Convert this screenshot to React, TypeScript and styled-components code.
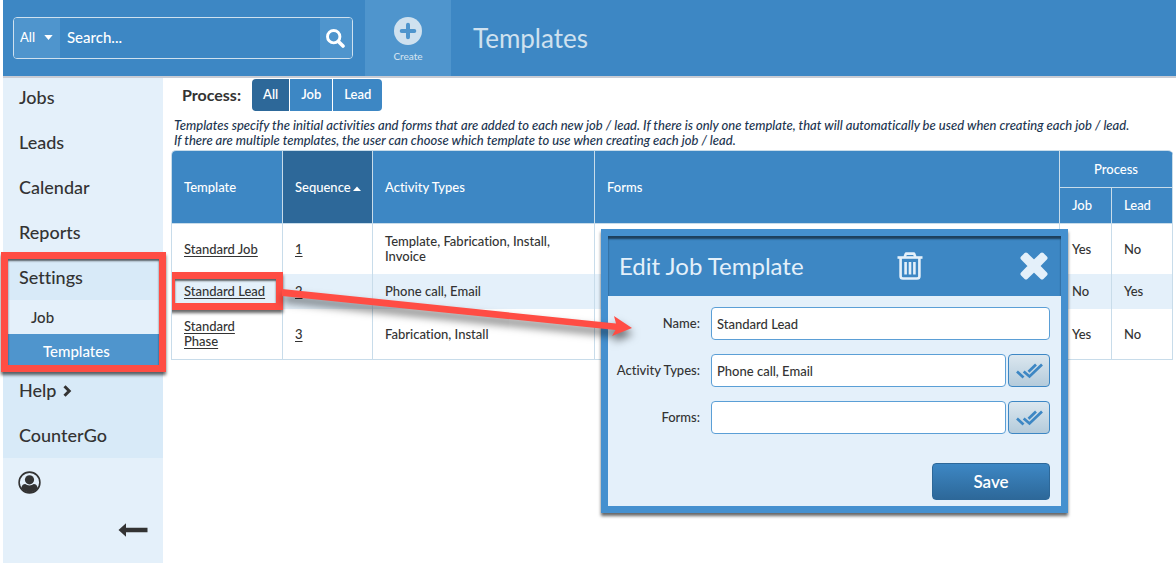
import React from "react";
import styled, { createGlobalStyle, css } from "styled-components";

const color = {
  blue: "#3d87c4",
  blueLight: "#4f95cd",
  blueDark: "#2d6899",
  frame: "#4590cf",
  pale: "#e4f0fa",
  paleDeep: "#d8eaf8",
  line: "#c8dcea",
  text: "#333333",
  navy: "#1c3550",
  soft: "#cfe1ef",
  red: "#ff4d44",
};

const GlobalStyle = createGlobalStyle`
  * { box-sizing: border-box; }
  body {
    margin: 0;
    background: #fff;
    color: ${color.text};
    font: 500 13px/15px Lato, "Open Sans", sans-serif;
    font-variant-ligatures: none;
  }
  button, input, select {
    font: inherit;
    font-variant-ligatures: inherit;
    color: inherit;
    margin: 0;
  }
  button { cursor: pointer; }
  svg { display: block; }
`;

const Page = styled.div`
  padding-left: 3px;
  min-height: 100vh;
  display: flex;
  flex-direction: column;
`;

const Header = styled.header`
  position: relative;
  z-index: 1;
  display: flex;
  align-items: stretch;
  height: 75px;
  background: ${color.blue};
  box-shadow: 0 1px 0 ${color.blue}, 0 3px 0 #c9ccd4;
`;

const SearchForm = styled.form`
  display: flex;
  width: 340px;
  height: 42px;
  margin: 17px 12px 0 10px;
  border: 1px solid ${color.soft};
  border-radius: 4px;
  overflow: hidden;
  color: #fff;
`;

const ScopeWrap = styled.div`
  position: relative;
  width: 46px;
  background: ${color.blueLight};
  svg {
    position: absolute;
    right: 7px;
    top: 17px;
    pointer-events: none;
  }
`;

const ScopeSelect = styled.select`
  appearance: none;
  width: 100%;
  height: 100%;
  padding: 0 0 2px 6px;
  border: 0;
  background: transparent;
  font-size: 13px;
  option { color: ${color.text}; }
`;

const SearchInput = styled.input`
  flex: 1;
  min-width: 0;
  padding: 0 7px 2px;
  border: 0;
  background: transparent;
  font-size: 15px;
  &::placeholder { color: #fff; opacity: 1; }
`;

const SearchButton = styled.button`
  display: grid;
  place-items: center;
  width: 32px;
  padding: 0 2px 0 0;
  border: 0;
  background: ${color.blueLight};
`;

const CreateButton = styled.button`
  display: flex;
  flex-direction: column;
  align-items: center;
  gap: 4px;
  width: 86px;
  height: 76px;
  padding: 17px 0 0;
  border: 0;
  background: ${color.blueLight};
  color: ${color.soft};
  font-size: 10px;
  line-height: 15px;
`;

const PageTitle = styled.h1`
  margin: 0 0 0 22px;
  color: ${color.soft};
  font-size: 26px;
  font-weight: 400;
  line-height: 76px;
`;

const Body = styled.div`
  flex: 1;
  display: flex;
`;

const Sidebar = styled.nav`
  flex: 0 0 160px;
  background: ${color.pale};
`;

const NavLink = styled.a<{ $shaded?: boolean }>`
  display: flex;
  align-items: center;
  gap: 7px;
  height: 45px;
  padding-left: 16px;
  background: ${(p) => (p.$shaded ? color.paleDeep : "transparent")};
  color: ${color.text};
  font-size: 18px;
  text-decoration: none;
`;

const SubLink = styled.a<{ $active?: boolean }>`
  display: flex;
  align-items: center;
  height: 34px;
  padding-left: ${(p) => (p.$active ? 40 : 28)}px;
  background: ${(p) => (p.$active ? color.blueLight : "transparent")};
  color: ${(p) => (p.$active ? "#fff" : color.text)};
  font-size: 15px;
  text-decoration: none;
`;

const NavGroup = styled.div`
  position: relative;
`;

const marker = css`
  position: absolute;
  z-index: 2;
  border: 7px solid ${color.red};
  box-shadow: 0 3px 3px rgba(0, 0, 0, 0.6), inset 0 2px 2px rgba(0, 0, 0, 0.6);
  pointer-events: none;
`;

const GroupMarker = styled.span`
  ${marker}
  inset: -3px -3px -4px -2px;
`;

const CellMarker = styled.span`
  ${marker}
  inset: -2px -1px -1px -4px;
`;

const IconButton = styled.button<{ $end?: boolean }>`
  display: flex;
  align-items: center;
  justify-content: ${(p) => (p.$end ? "flex-end" : "flex-start")};
  width: 100%;
  height: 48px;
  padding: 0 15px;
  border: 0;
  background: transparent;
  color: ${color.text};
`;

const Main = styled.main`
  position: relative;
  flex: 1;
  min-width: 0;
  padding: 4px 3px 0 8px;
`;

const FilterRow = styled.div`
  display: flex;
  align-items: center;
  gap: 11px;
  padding-left: 11px;
`;

const FilterLabel = styled.span`
  padding-bottom: 2px;
  font-size: 16px;
  font-weight: 700;
`;

const Segments = styled.div`
  display: flex;
  gap: 1px;
  border-radius: 4px;
  overflow: hidden;
`;

const Segment = styled.button<{ $active?: boolean }>`
  height: 32px;
  padding: 0 11px 2px;
  border: 0;
  background: ${(p) => (p.$active ? color.blueDark : color.blue)};
  color: #fff;
  font-weight: 600;
`;

const Intro = styled.p`
  margin: 7px 0 2px;
  padding-left: 3px;
  color: ${color.navy};
  font-style: italic;
`;

const Table = styled.table`
  width: 100%;
  table-layout: fixed;
  border-collapse: separate;
  border-spacing: 0;
  border: solid ${color.line};
  border-width: 1px 0 0 1px;
  border-radius: 5px 5px 0 0;
  overflow: hidden;
`;

const Col = styled.col<{ $w?: number }>`
  width: ${(p) => (p.$w ? `${p.$w}px` : "auto")};
`;

const Th = styled.th<{ $sorted?: boolean; $center?: boolean }>`
  height: ${(p) => (p.$center ? 37 : 36)}px;
  padding: 0 0 0 12px;
  border: solid ${color.line};
  border-width: 0 1px 1px 0;
  background: ${(p) => (p.$sorted ? color.blueDark : color.blue)};
  color: #fff;
  font-weight: 500;
  text-align: ${(p) => (p.$center ? "center" : "left")};
  ${(p) => p.$center && "padding-left: 0;"}
  white-space: nowrap;
  svg { display: inline-block; margin-left: 2px; vertical-align: 1px; }
`;

const Row = styled.tr`
  &:nth-child(even) { background: ${color.pale}; }
  &:last-child td { border-bottom: 1px solid ${color.line}; }
`;

const Td = styled.td`
  position: relative;
  padding: 10px 30px 10px 12px;
  border-right: 1px solid ${color.line};
  &:first-child { padding-right: 12px; }
`;

const CellLink = styled.a`
  color: ${color.text};
  text-decoration: underline;
  text-underline-offset: 2px;
`;

const Dialog = styled.section`
  position: absolute;
  z-index: 3;
  left: 438px;
  top: 154px;
  width: 467px;
  border: 7px solid ${color.frame};
  background: ${color.pale};
  box-shadow: 0 3px 3px rgba(0, 0, 0, 0.6);
`;

const DialogHeader = styled.div`
  display: flex;
  align-items: center;
  height: 60px;
  padding: 0 13px 0 11px;
  background: ${color.blue};
  box-shadow: inset 0 3px 2px #1d3f5c;
  color: ${color.pale};
`;

const DialogTitle = styled.h2`
  flex: 1;
  margin: 0;
  font-size: 24px;
  font-weight: 400;
  line-height: 30px;
`;

const HeaderButton = styled.button`
  padding: 0;
  border: 0;
  background: transparent;
  & + & { margin-left: 97px; }
`;

const DialogForm = styled.form`
  display: grid;
  grid-template-columns: 92px 1fr;
  gap: 14px 11px;
  padding: 11px 11px 6px 0;
`;

const FieldLabel = styled.label`
  align-self: center;
  text-align: right;
`;

const FieldControls = styled.div`
  display: flex;
  gap: 2px;
`;

const TextInput = styled.input`
  flex: 1;
  min-width: 0;
  height: 33px;
  padding: 0 5px;
  border: 1px solid #5b9fd6;
  border-radius: 4px;
  background: #fff;
`;

const PickButton = styled.button`
  display: grid;
  place-items: center;
  width: 42px;
  height: 33px;
  padding: 0;
  border: 1px solid ${color.blue};
  border-radius: 4px;
  background: linear-gradient(#dbe7ef, #b4cbdb);
  color: ${color.blue};
`;

const SaveButton = styled.button`
  grid-column: 2;
  justify-self: end;
  width: 118px;
  height: 37px;
  margin-top: 15px;
  border: 1px solid ${color.blueDark};
  border-radius: 4px;
  background: linear-gradient(${color.blue}, ${color.blueDark});
  color: #fff;
  font-size: 17px;
  font-weight: 600;
`;

const Pointer = styled.svg`
  position: absolute;
  z-index: 4;
  left: 119px;
  top: 205px;
  pointer-events: none;
  filter: drop-shadow(1px 6px 4px rgba(0, 0, 0, 0.55));
`;

const SearchIcon = () => (
  <svg width="19" height="19" viewBox="0 0 19 19" fill="none" stroke="#fff">
    <circle cx="7.7" cy="7.7" r="6.2" strokeWidth="2.9" />
    <path d="M12.4 12.4 17 17" strokeWidth="3.6" strokeLinecap="round" />
  </svg>
);

const PlusIcon = () => (
  <svg width="28" height="28" viewBox="0 0 28 28">
    <circle cx="14" cy="14" r="14" fill={color.soft} />
    <path d="M14 7.700v12.600M7.700 14h12.600" stroke={color.blueLight} strokeWidth="4" strokeLinecap="round" />
  </svg>
);

const CaretDown = () => (
  <svg width="9" height="5" viewBox="0 0 9 5">
    <path d="M.3 0h8.4L4.5 5z" fill="#fff" />
  </svg>
);

const CaretUp = () => (
  <svg width="8" height="5" viewBox="0 0 8 5">
    <path d="M0 5h8L4 .5z" fill="#fff" />
  </svg>
);

const ChevronIcon = () => (
  <svg width="9" height="13" viewBox="0 0 9 13">
    <path d="M1.500 2.300 6.200 7 1.500 11.700" fill="none" stroke="currentColor" strokeWidth="3" />
  </svg>
);

const UserIcon = () => (
  <svg width="23" height="23" viewBox="0 0 23 23">
    <circle cx="11.5" cy="11.5" r="10.4" fill="none" stroke="currentColor" strokeWidth="1.6" />
    <circle cx="11.5" cy="8.8" r="4.6" fill="currentColor" />
    <path d="M3.300 17.200c.4-2.700 1.700-4.200 4-4.200 1.100.900 2.500 1.400 4.200 1.400s3.100-.5 4.200-1.400c2.300 0 3.600 1.500 4 4.200a10 10 0 0 1-16.400 0z" fill="currentColor" />
  </svg>
);

const BackIcon = () => (
  <svg width="30" height="14" viewBox="0 0 30 14">
    <path d="M.5 7 8 .3v4.500h21.500v4.400H8v4.500z" fill="currentColor" />
  </svg>
);

const TrashIcon = () => (
  <svg width="26" height="28" viewBox="0 0 26 28" fill="none" stroke="currentColor">
    <path d="M.5 5.500h25" strokeWidth="2.600" />
    <path d="M7.600 5 9 1.600h8L18.400 5" strokeWidth="2.600" strokeLinejoin="round" />
    <path d="M3.600 6v18.200q0 2.300 2.400 2.300h14q2.400 0 2.400-2.300V6" strokeWidth="2.600" />
    <path d="M8.600 10v12.500M13 10v12.500M17.400 10v12.500" strokeWidth="2.600" />
  </svg>
);

const CloseIcon = () => (
  <svg width="28" height="28" viewBox="0 0 28 28">
    <path
      d="M6 2.500 14 10.300 22 2.500 25.500 6 17.700 14 25.500 22 22 25.500 14 17.700 6 25.500 2.500 22 10.300 14 2.500 6z"
      fill="currentColor"
      stroke="currentColor"
      strokeWidth="4"
      strokeLinejoin="round"
    />
  </svg>
);

const DoubleCheckIcon = () => (
  <svg width="27" height="16" viewBox="0 0 27 16" fill="none" stroke="currentColor" strokeWidth="2.700">
    <path d="M1 8.500 7.500 14.500" />
    <path d="M7.700 8.500 13.500 13.500 26 1.500" />
    <path d="M12.500 8.800 20 1.500" />
  </svg>
);

const ROWS = [
  { name: "Standard Job", seq: 1, types: "Template, Fabrication, Install, Invoice", job: "Yes", lead: "No" },
  { name: "Standard Lead", seq: 2, types: "Phone call, Email", job: "No", lead: "Yes", marked: true },
  { name: "Standard Phase", seq: 3, types: "Fabrication, Install", job: "Yes", lead: "No" },
];

export default function App() {
  return (
    <>
      <GlobalStyle />
      <Page>
        <Header>
          <SearchForm role="search" onSubmit={(e) => e.preventDefault()}>
            <ScopeWrap>
              <ScopeSelect aria-label="Search scope">
                <option>All</option>
              </ScopeSelect>
              <CaretDown />
            </ScopeWrap>
            <SearchInput type="text" placeholder="Search..." aria-label="Search" />
            <SearchButton aria-label="Submit search">
              <SearchIcon />
            </SearchButton>
          </SearchForm>
          <CreateButton type="button">
            <PlusIcon />
            Create
          </CreateButton>
          <PageTitle>Templates</PageTitle>
        </Header>
        <Body>
          <Sidebar>
            {["Jobs", "Leads", "Calendar", "Reports"].map((label) => (
              <NavLink href="#" key={label}>{label}</NavLink>
            ))}
            <NavGroup>
              <NavLink href="#" $shaded>Settings</NavLink>
              <SubLink href="#">Job</SubLink>
              <SubLink href="#" $active>Templates</SubLink>
              <GroupMarker />
            </NavGroup>
            <NavLink href="#" $shaded>Help <ChevronIcon /></NavLink>
            <NavLink href="#" $shaded>CounterGo</NavLink>
            <IconButton type="button" aria-label="Account"><UserIcon /></IconButton>
            <IconButton type="button" aria-label="Collapse menu" $end><BackIcon /></IconButton>
          </Sidebar>
          <Main>
            <FilterRow>
              <FilterLabel id="process-label">Process:</FilterLabel>
              <Segments role="group" aria-labelledby="process-label">
                <Segment type="button" $active>All</Segment>
                <Segment type="button">Job</Segment>
                <Segment type="button">Lead</Segment>
              </Segments>
            </FilterRow>
            <Intro>
              Templates specify the initial activities and forms that are added to each new job / lead. If there is
              only one template, that will automatically be used when creating each job / lead.
              <br />
              If there are multiple templates, the user can choose which template to use when creating each job / lead.
            </Intro>
            <Table>
              <colgroup>
                <Col $w={111} />
                <Col $w={90} />
                <Col $w={222} />
                <Col />
                <Col $w={52} />
                <Col $w={61} />
              </colgroup>
              <thead>
                <tr>
                  <Th rowSpan={2}>Template</Th>
                  <Th rowSpan={2} $sorted aria-sort="ascending">Sequence<CaretUp /></Th>
                  <Th rowSpan={2}>Activity Types</Th>
                  <Th rowSpan={2}>Forms</Th>
                  <Th colSpan={2} $center>Process</Th>
                </tr>
                <tr>
                  <Th>Job</Th>
                  <Th>Lead</Th>
                </tr>
              </thead>
              <tbody>
                {ROWS.map((row) => (
                  <Row key={row.seq}>
                    <Td>
                      <CellLink href="#">{row.name}</CellLink>
                      {row.marked && <CellMarker />}
                    </Td>
                    <Td><CellLink href="#">{row.seq}</CellLink></Td>
                    <Td>{row.types}</Td>
                    <Td />
                    <Td>{row.job}</Td>
                    <Td>{row.lead}</Td>
                  </Row>
                ))}
              </tbody>
            </Table>
            <Dialog role="dialog" aria-labelledby="dialog-title">
              <DialogHeader>
                <DialogTitle id="dialog-title">Edit Job Template</DialogTitle>
                <HeaderButton type="button" aria-label="Delete"><TrashIcon /></HeaderButton>
                <HeaderButton type="button" aria-label="Close"><CloseIcon /></HeaderButton>
              </DialogHeader>
              <DialogForm onSubmit={(e) => e.preventDefault()}>
                <FieldLabel htmlFor="name">Name:</FieldLabel>
                <FieldControls>
                  <TextInput id="name" type="text" defaultValue="Standard Lead" />
                </FieldControls>
                <FieldLabel htmlFor="types">Activity Types:</FieldLabel>
                <FieldControls>
                  <TextInput id="types" type="text" defaultValue="Phone call, Email" />
                  <PickButton type="button" aria-label="Choose activity types"><DoubleCheckIcon /></PickButton>
                </FieldControls>
                <FieldLabel htmlFor="forms">Forms:</FieldLabel>
                <FieldControls>
                  <TextInput id="forms" type="text" />
                  <PickButton type="button" aria-label="Choose forms"><DoubleCheckIcon /></PickButton>
                </FieldControls>
                <SaveButton>Save</SaveButton>
              </DialogForm>
            </Dialog>
            <Pointer width="360" height="64" viewBox="0 0 360 64" aria-hidden="true">
              <path d="M0 9 334 43.500 332 36 350 48 330 56 333.500 50 0 16z" fill={color.red} />
            </Pointer>
          </Main>
        </Body>
      </Page>
    </>
  );
}
